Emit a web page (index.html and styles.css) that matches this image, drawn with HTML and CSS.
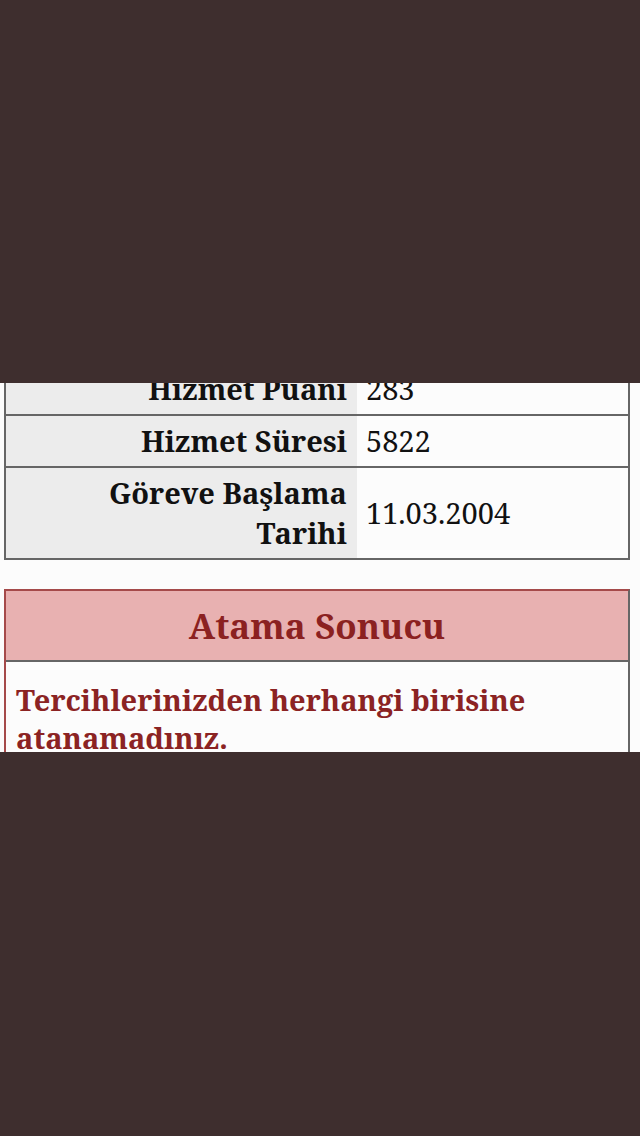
FILE: index.html
```html
<!DOCTYPE html>
<html lang="tr">
<head>
<meta charset="utf-8">
<link rel="stylesheet" href="styles.css">
</head>
<body>
<div class="shade shade-top"></div>
<div class="viewport">
  <div class="content">
    <table class="info">
      <tr><th>Hizmet Puanı</th><td>283</td></tr>
      <tr><th>Hizmet Süresi</th><td>5822</td></tr>
      <tr><th>Göreve Başlama Tarihi</th><td>11.03.2004</td></tr>
    </table>
    <div class="result">
      <div class="result-head">Atama Sonucu</div>
      <div class="result-body">Tercihlerinizden herhangi birisine atanamadınız.</div>
    </div>
  </div>
</div>
<div class="shade shade-bottom"></div>
</body>
</html>
```
FILE: styles.css
```css
html, body {
  margin: 0;
  padding: 0;
  background: #3e2e2e;
}
body {
  width: 640px;
  height: 1136px;
  display: flex;
  flex-direction: column;
  font-family: "Noto Serif", "DejaVu Serif", serif;
}
.shade-top { height: 383px; background: #3e2e2e; }
.shade-bottom { flex: 1; background: #3e2e2e; }
.viewport {
  height: 369px;
  background: #fcfcfc;
  overflow: hidden;
}
.content {
  margin-top: -21px;
  padding: 0 10px 0 4px;
}
.info {
  width: 100%;
  border-collapse: collapse;
  border: 2px solid #666;
}
.info tr { border-top: 2px solid #666; }
.info th {
  width: 56.4%;
  background: #ececec;
  text-align: right;
  font-weight: bold;
  font-size: 29px;
  line-height: 40px;
  padding: 5px 10px;
  color: #111;
}
.info td {
  background: #fcfcfc;
  font-size: 29px;
  line-height: 40px;
  padding: 5px 9px;
  color: #111;
}
.result {
  margin-top: 29px;
  border: 2px solid #666;
  border-top-color: #a54a4a;
  border-left-color: #a54a4a;
}
.result-head {
  background: #e8b1b1;
  color: #8b2121;
  text-align: center;
  font-weight: bold;
  font-size: 35px;
  line-height: 69px;
  border-bottom: 2px solid #666;
}
.result-body {
  padding: 19px 10px;
  color: #8b2323;
  font-weight: bold;
  font-size: 29px;
  line-height: 38px;
}
```
